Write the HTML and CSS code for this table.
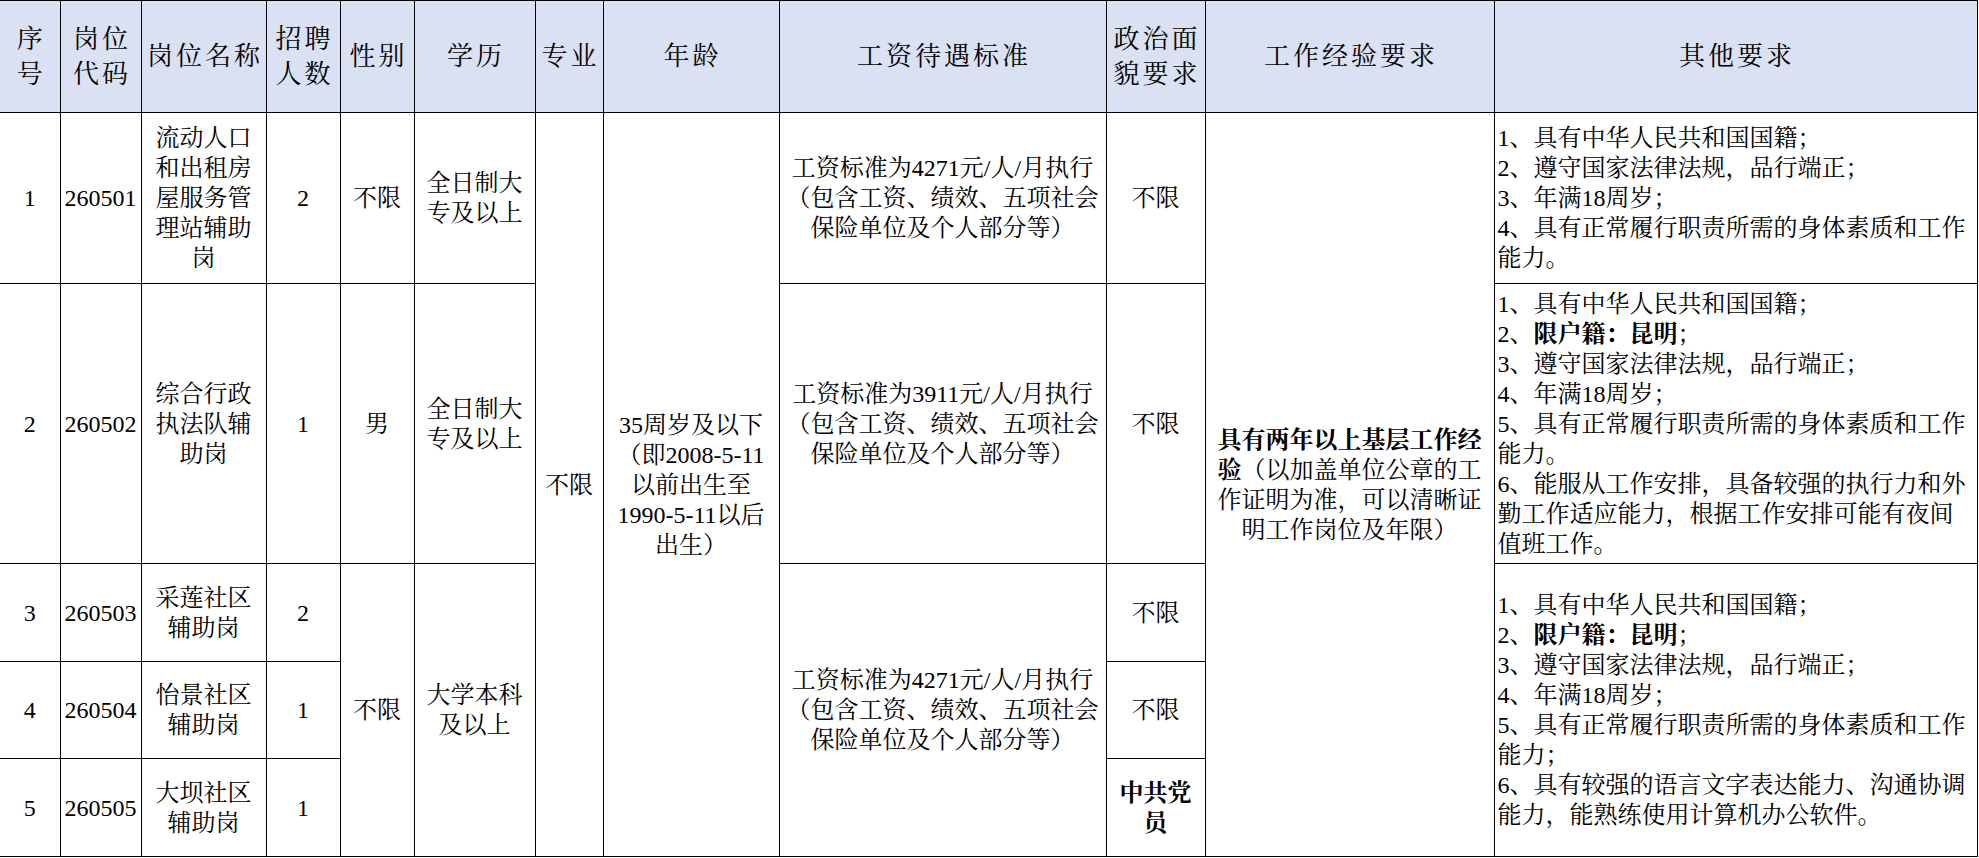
FILE: index.html
```html
<!DOCTYPE html>
<html lang="zh-CN">
<head>
<meta charset="utf-8">
<title>岗位表</title>
<link rel="stylesheet" href="styles.css">
</head>
<body>
<table class="sheet">
  <colgroup>
    <col class="c-no"><col class="c-code"><col class="c-name"><col class="c-num"><col class="c-sex"><col class="c-edu"><col class="c-major"><col class="c-age"><col class="c-pay"><col class="c-pol"><col class="c-exp"><col class="c-other">
  </colgroup>
  <thead>
    <tr class="r-head">
      <th>序<br>号</th>
      <th>岗位<br>代码</th>
      <th>岗位名称</th>
      <th>招聘<br>人数</th>
      <th>性别</th>
      <th>学历</th>
      <th>专业</th>
      <th>年龄</th>
      <th>工资待遇标准</th>
      <th>政治面<br>貌要求</th>
      <th>工作经验要求</th>
      <th>其他要求</th>
    </tr>
  </thead>
  <tbody>
    <tr class="r1">
      <td>1</td>
      <td>260501</td>
      <td>流动人口<br>和出租房<br>屋服务管<br>理站辅助<br>岗</td>
      <td>2</td>
      <td>不限</td>
      <td>全日制大<br>专及以上</td>
      <td rowspan="5">不限</td>
      <td rowspan="5">35周岁及以下<br>（即2008-5-11<br>以前出生至<br>1990-5-11以后<br>出生）</td>
      <td>工资标准为4271元/人/月执行<br>（包含工资、绩效、五项社会<br>保险单位及个人部分等）</td>
      <td>不限</td>
      <td rowspan="5" class="exp"><span class="b">具有两年以上基层工作经</span><br><span class="b">验</span>（以加盖单位公章的工<br>作证明为准，可以清晰证<br>明工作岗位及年限）</td>
      <td class="left">
        <div>1、具有中华人民共和国国籍；</div>
        <div>2、遵守国家法律法规，品行端正；</div>
        <div>3、年满18周岁；</div>
        <div>4、具有正常履行职责所需的身体素质和工作</div>
        <div>能力。</div>
      </td>
    </tr>
    <tr class="r2">
      <td>2</td>
      <td>260502</td>
      <td>综合行政<br>执法队辅<br>助岗</td>
      <td>1</td>
      <td>男</td>
      <td>全日制大<br>专及以上</td>
      <td>工资标准为3911元/人/月执行<br>（包含工资、绩效、五项社会<br>保险单位及个人部分等）</td>
      <td>不限</td>
      <td class="left">
        <div>1、具有中华人民共和国国籍；</div>
        <div>2、<span class="b">限户籍：昆明</span>；</div>
        <div>3、遵守国家法律法规，品行端正；</div>
        <div>4、年满18周岁；</div>
        <div>5、具有正常履行职责所需的身体素质和工作</div>
        <div>能力。</div>
        <div>6、能服从工作安排，具备较强的执行力和外</div>
        <div>勤工作适应能力，根据工作安排可能有夜间</div>
        <div>值班工作。</div>
      </td>
    </tr>
    <tr class="r3">
      <td>3</td>
      <td>260503</td>
      <td>采莲社区<br>辅助岗</td>
      <td>2</td>
      <td rowspan="3">不限</td>
      <td rowspan="3">大学本科<br>及以上</td>
      <td rowspan="3">工资标准为4271元/人/月执行<br>（包含工资、绩效、五项社会<br>保险单位及个人部分等）</td>
      <td>不限</td>
      <td rowspan="3" class="left">
        <div>1、具有中华人民共和国国籍；</div>
        <div>2、<span class="b">限户籍：昆明</span>；</div>
        <div>3、遵守国家法律法规，品行端正；</div>
        <div>4、年满18周岁；</div>
        <div>5、具有正常履行职责所需的身体素质和工作</div>
        <div>能力；</div>
        <div>6、具有较强的语言文字表达能力、沟通协调</div>
        <div>能力，能熟练使用计算机办公软件。</div>
      </td>
    </tr>
    <tr class="r4">
      <td>4</td>
      <td>260504</td>
      <td>怡景社区<br>辅助岗</td>
      <td>1</td>
      <td>不限</td>
    </tr>
    <tr class="r5">
      <td>5</td>
      <td>260505</td>
      <td>大坝社区<br>辅助岗</td>
      <td>1</td>
      <td class="strong">中共党<br>员</td>
    </tr>
  </tbody>
</table>
</body>
</html>
```

FILE: styles.css
```css
html, body {
  margin: 0;
  padding: 0;
  background: #ffffff;
}

.sheet {
  border-collapse: collapse;
  table-layout: fixed;
  width: 1977px;
  font-family: "Liberation Serif", "Noto Serif CJK SC", "Noto Sans CJK SC", serif;
  font-size: 24px;
  color: #000000;
}

.c-no { width: 60px; }
.c-code { width: 81px; }
.c-name { width: 125px; }
.c-num { width: 74px; }
.c-sex { width: 74px; }
.c-edu { width: 121px; }
.c-major { width: 68px; }
.c-age { width: 176px; }
.c-pay { width: 327px; }
.c-pol { width: 99px; }
.c-exp { width: 289px; }
.c-other { width: 483px; }

.sheet th,
.sheet td {
  border: 1px solid #000000;
  padding: 0 2px;
  text-align: center;
  vertical-align: middle;
  line-height: 30px;
  font-weight: normal;
  white-space: nowrap;
}

.sheet tr > :first-child {
  border-left: none;
}

.sheet th {
  background: #d9e1f2;
  font-size: 26px;
  line-height: 35px;
  letter-spacing: 3px;
  padding-left: 5px;
}

.r-head { height: 112px; }
.r1 { height: 171px; }
.r2 { height: 280px; }
.r3 { height: 98px; }
.r4 { height: 97px; }
.r5 { height: 98px; }

.sheet td.left {
  text-align: left;
  padding-left: 3px;
}

.sheet td.strong,
.b {
  font-weight: bold;
}
```
